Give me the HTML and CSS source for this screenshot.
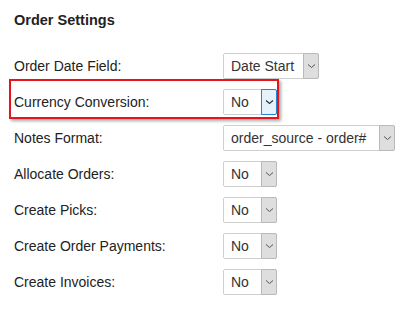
FILE: index.html
```html
<!DOCTYPE html>
<html>
<head>
<meta charset="utf-8">
<link rel="stylesheet" href="styles.css">
</head>
<body>
<div class="panel">
  <h2 class="title">Order Settings</h2>
  <div class="rows">
    <div class="row">
      <span class="label">Order Date Field:</span>
      <div class="select w-date"><span class="value">Date Start</span><span class="arrow"><svg width="9" height="6" viewBox="0 0 9 6"><path d="M1 1.5 L4.5 4.5 L8 1.5" fill="none" stroke="#555" stroke-width="1"/></svg></span></div>
    </div>
    <div class="row hl">
      <div class="highlight"></div>
      <span class="label">Currency Conversion:</span>
      <div class="select w-no focus"><span class="value">No</span><span class="arrow"><svg width="9" height="6" viewBox="0 0 9 6"><path d="M1 1.5 L4.5 4.5 L8 1.5" fill="none" stroke="#333" stroke-width="1.2"/></svg></span></div>
    </div>
    <div class="row">
      <span class="label">Notes Format:</span>
      <div class="select w-notes"><span class="value">order_source - order#</span><span class="arrow"><svg width="9" height="6" viewBox="0 0 9 6"><path d="M1 1.5 L4.5 4.5 L8 1.5" fill="none" stroke="#555" stroke-width="1"/></svg></span></div>
    </div>
    <div class="row">
      <span class="label">Allocate Orders:</span>
      <div class="select w-no"><span class="value">No</span><span class="arrow"><svg width="9" height="6" viewBox="0 0 9 6"><path d="M1 1.5 L4.5 4.5 L8 1.5" fill="none" stroke="#555" stroke-width="1"/></svg></span></div>
    </div>
    <div class="row">
      <span class="label">Create Picks:</span>
      <div class="select w-no"><span class="value">No</span><span class="arrow"><svg width="9" height="6" viewBox="0 0 9 6"><path d="M1 1.5 L4.5 4.5 L8 1.5" fill="none" stroke="#555" stroke-width="1"/></svg></span></div>
    </div>
    <div class="row">
      <span class="label">Create Order Payments:</span>
      <div class="select w-no"><span class="value">No</span><span class="arrow"><svg width="9" height="6" viewBox="0 0 9 6"><path d="M1 1.5 L4.5 4.5 L8 1.5" fill="none" stroke="#555" stroke-width="1"/></svg></span></div>
    </div>
    <div class="row">
      <span class="label">Create Invoices:</span>
      <div class="select w-no"><span class="value">No</span><span class="arrow"><svg width="9" height="6" viewBox="0 0 9 6"><path d="M1 1.5 L4.5 4.5 L8 1.5" fill="none" stroke="#555" stroke-width="1"/></svg></span></div>
    </div>
  </div>
</div>
</body>
</html>
```

FILE: styles.css
```css
html, body {
  margin: 0;
  padding: 0;
  background: #fff;
}
body {
  font-family: "Liberation Sans", Arial, sans-serif;
  color: #222;
}
.panel {
  padding: 11px 0 0 14px;
  width: 414px;
  height: 315px;
  box-sizing: border-box;
}
.title {
  margin: 0;
  font-size: 14.5px;
  font-weight: bold;
  line-height: 18px;
  color: #222;
}
.rows {
  margin-top: 19px;
  display: flex;
  flex-direction: column;
}
.row {
  position: relative;
  height: 36px;
  display: flex;
  align-items: center;
}
.label {
  width: 209px;
  font-size: 14px;
  color: #222;
}
.select {
  display: flex;
  height: 26px;
  box-sizing: border-box;
  border: 1px solid #cfcfcf;
  border-radius: 2px;
  background: #fff;
}
.value {
  flex: 1;
  padding-left: 7px;
  font-size: 14px;
  line-height: 24px;
  color: #333;
  white-space: nowrap;
}
.arrow {
  width: 16px;
  box-sizing: border-box;
  margin: -1px -1px -1px 0;
  border: 1px solid #b9b9b9;
  border-radius: 0 2px 2px 0;
  background: #dedede;
  display: flex;
  align-items: center;
  justify-content: center;
}
.focus .arrow {
  border-color: #2a7fd0;
  background: #e5f1fb;
}
.w-date { width: 96px; }
.w-no { width: 54px; }
.w-notes { width: 172px; }
.highlight {
  position: absolute;
  left: -5px;
  top: -5px;
  width: 270px;
  height: 40px;
  box-sizing: border-box;
  border: 2px solid #e8141b;
  box-shadow: 2px 2px 3px rgba(0,0,0,0.35);
  pointer-events: none;
}
```
